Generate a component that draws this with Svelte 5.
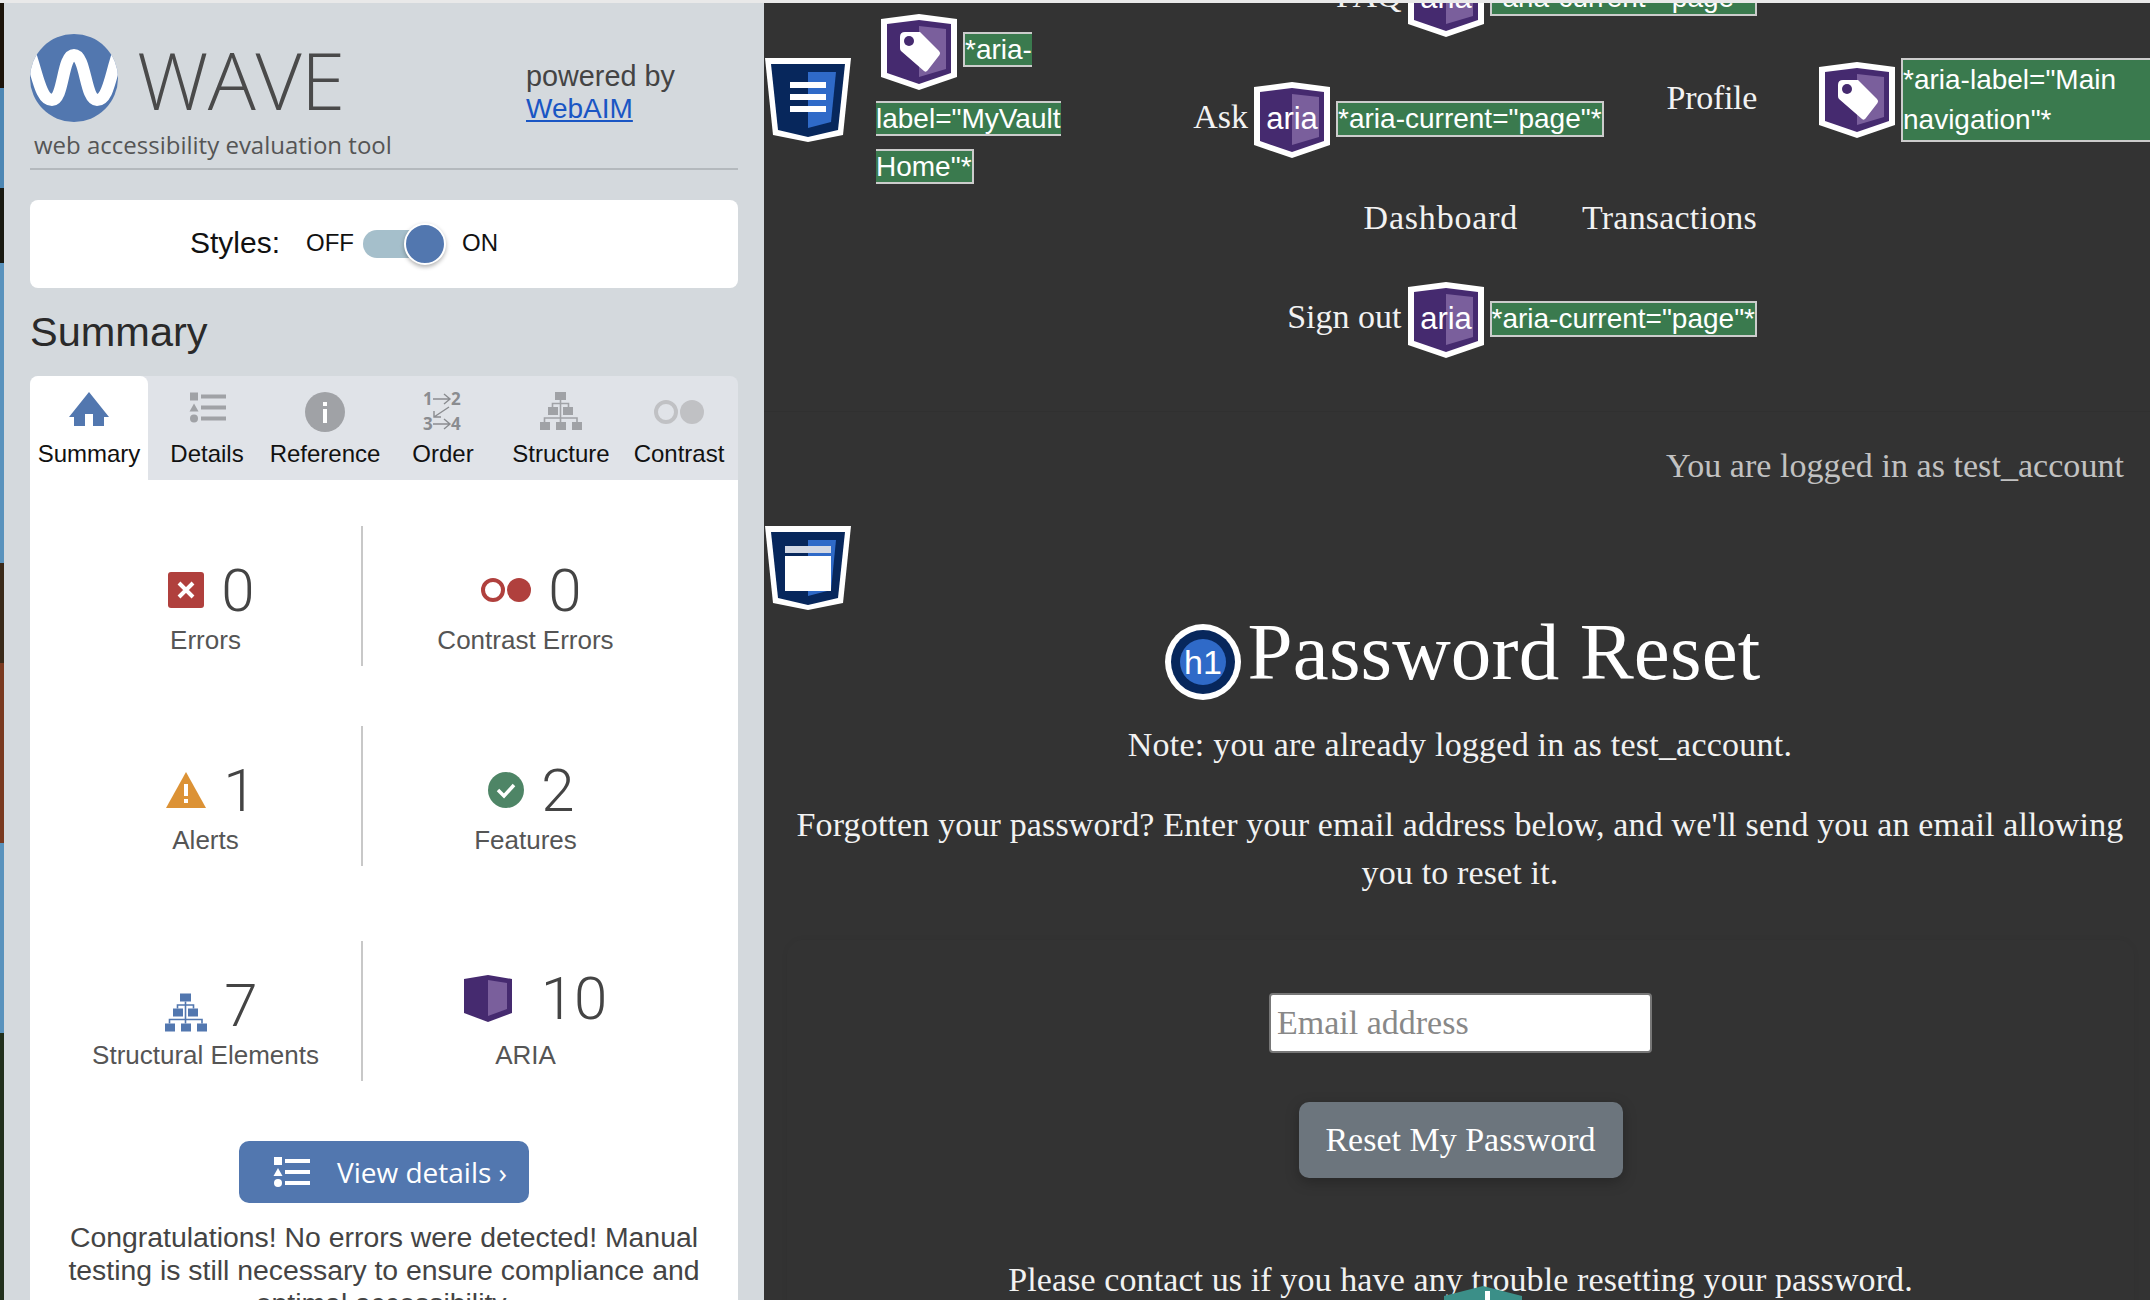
<script>
  const tabs = ['Summary', 'Details', 'Reference', 'Order', 'Structure', 'Contrast'];
</script>

{#snippet listIcon(w, h)}
  <svg width={w} height={h} viewBox="0 0 37 30" fill="currentColor" aria-hidden="true">
    <rect x="1" y="0" width="8" height="8" />
    <path d="M5 11 L9.5 19 H0.5 Z" />
    <circle cx="5" cy="26" r="4" />
    <rect x="12" y="2" width="25" height="4" />
    <rect x="12" y="13" width="25" height="4" />
    <rect x="12" y="24" width="25" height="4" />
  </svg>
{/snippet}

{#snippet org(w, h)}
  <svg width={w} height={h} viewBox="0 0 42 38" fill="currentColor" aria-hidden="true">
    <rect x="15" y="0" width="11" height="8" />
    <rect x="8" y="15" width="10" height="8" />
    <rect x="23" y="15" width="10" height="8" />
    <rect x="0" y="30" width="10" height="8" />
    <rect x="16" y="30" width="10" height="8" />
    <rect x="32" y="30" width="10" height="8" />
    <path d="M20.5 8 V30 M12.5 15 V11.5 H28.5 V15 M4.5 30 V26 H37 V30" fill="none" stroke="currentColor" stroke-width="1.6" />
  </svg>
{/snippet}

{#snippet shield(label)}
  <svg class="badge" width="76" height="76" viewBox="0 0 76 76" aria-hidden="true">
    <path d="M0 5 L38 0 L76 5 V63 L38 76 L0 63 Z" fill="#fff" />
    <path d="M6 10 L38 6 L70 10 V59 L38 70 L6 59 Z" fill="#452a6f" />
    <path d="M38 12 L65 15 V55 L38 63 Z" fill="#7a5f9c" />
    {#if label}
      <text x="38" y="47" text-anchor="middle" class="badge-text">aria</text>
    {:else}
      <path d="M24 18 H39 L58 37 Q60 39 58.500 41 L46.500 56.500 Q45 58.500 43 57 L20 37 Q19 36 19 34 V23 Q19 18 24 18 Z" fill="#fff" />
      <circle cx="28" cy="27" r="5" fill="#452a6f" />
    {/if}
  </svg>
{/snippet}

{#snippet html5(kind)}
  <svg class="h5" width="86" height="84" viewBox="0 0 86 84" aria-hidden="true">
    <path d="M0 0 H86 L78 77 L43 84 L8 77 Z" fill="#fff" />
    <path d="M6 6 H80 L73 72 L43 79 L13 72 Z" fill="#07275c" />
    <path d="M43 14 H71 L66 64 L43 70 Z" fill="#2f6ac8" />
    {#if kind === 'nav'}
      <rect x="25" y="24" width="36" height="6" fill="#fff" />
      <rect x="25" y="36" width="36" height="6" fill="#fff" />
      <rect x="25" y="48" width="36" height="6" fill="#fff" />
    {:else}
      <rect x="20" y="20" width="46" height="7" fill="#d3d8e4" />
      <rect x="20" y="30" width="46" height="35" fill="#fff" />
    {/if}
  </svg>
{/snippet}

<div class="strip-top"></div>
<div class="app">
  <div class="wall"></div>
  <aside class="side">
    <header class="head">
      <div class="brand-row">
        <svg class="logo" width="88" height="88" viewBox="0 0 88 88" aria-hidden="true">
          <defs><clipPath id="cc"><circle cx="44" cy="44" r="44" /></clipPath></defs>
          <circle cx="44" cy="44" r="44" fill="#5277af" />
          <path clip-path="url(#cc)" d="M-2 14 C8 40 10 66 22 66 C34 66 32 21 44 21 C56 21 55 66 67 66 C79 66 80 40 90 14" fill="none" stroke="#fff" stroke-width="12" />
        </svg>
        <div class="wave">WAVE</div>
        <div class="powered">powered by<br /><a href="#top">WebAIM</a></div>
      </div>
      <div class="tagline">web accessibility evaluation tool</div>
    </header>

    <div class="styles">
      <span class="st-label">Styles:</span>
      <span class="st-off">OFF</span>
      <span class="toggle"><span class="knob"></span></span>
      <span class="st-on">ON</span>
    </div>

    <h2 class="sum">Summary</h2>

    <div class="tabs">
      {#each tabs as t, i}
        <div class="tab" class:active={i === 0}>
          <div class="tab-ic">
            {#if i === 0}
              <svg width="40" height="34" viewBox="0 0 40 34" fill="#5277af" aria-hidden="true"><path d="M20 0 L40 25 H35 V34 H24 V22 H16 V34 H5 V25 H0 Z" /></svg>
            {:else if i === 1}
              <span class="grey">{@render listIcon(37, 31)}</span>
            {:else if i === 2}
              <svg width="40" height="40" viewBox="0 0 40 40" aria-hidden="true"><circle cx="20" cy="20" r="20" fill="#a0a2a6" /><rect x="18" y="10" width="4" height="4" fill="#fff" /><rect x="18" y="17" width="4" height="14" fill="#fff" /></svg>
            {:else if i === 3}
              <svg class="order-ic" width="46" height="56" viewBox="-3 -8 46 56" aria-hidden="true">
                <text x="0" y="13" class="ord">1</text><text x="28" y="13" class="ord">2</text>
                <text x="0" y="38" class="ord">3</text><text x="28" y="38" class="ord">4</text>
                <path d="M10 7 H26 M21 2 L27 7 L21 12 M10 32 H26 M21 27 L27 32 L21 37 M26 15 L11 25 M11 19 V25 H18" fill="none" stroke="#8a8c90" stroke-width="1.4" />
              </svg>
            {:else if i === 4}
              <span class="grey">{@render org(42, 38)}</span>
            {:else}
              <svg width="50" height="24" viewBox="0 0 50 24" aria-hidden="true"><circle cx="12" cy="12" r="10" fill="none" stroke="#c0c1c4" stroke-width="4" /><circle cx="38" cy="12" r="12" fill="#c0c1c4" /></svg>
            {/if}
          </div>
          <div class="tab-t">{t}</div>
        </div>
      {/each}
    </div>

    <div class="panel">
      <div class="grid">
        <div class="cell">
          <div class="num-row">
            <svg width="36" height="36" viewBox="0 0 36 36" aria-hidden="true"><rect width="36" height="36" rx="3" fill="#b0403d" /><path d="M11 11 L25 25 M25 11 L11 25" stroke="#fff" stroke-width="4" /></svg>
            <span class="num">0</span>
          </div>
          <div class="lab">Errors</div>
        </div>
        <div class="cell">
          <div class="num-row">
            <svg width="50" height="24" viewBox="0 0 50 24" aria-hidden="true"><circle cx="12" cy="12" r="10" fill="none" stroke="#b0403d" stroke-width="4" /><circle cx="38" cy="12" r="12" fill="#b0403d" /></svg>
            <span class="num">0</span>
          </div>
          <div class="lab">Contrast Errors</div>
        </div>
      </div>
      <div class="grid r2">
        <div class="cell">
          <div class="num-row">
            <svg width="40" height="36" viewBox="0 0 40 36" aria-hidden="true"><path d="M20 0 L40 36 H0 Z" fill="#dc9235" /><rect x="18" y="12" width="4" height="12" fill="#fff" /><rect x="18" y="27" width="4" height="4" fill="#fff" /></svg>
            <span class="num">1</span>
          </div>
          <div class="lab">Alerts</div>
        </div>
        <div class="cell">
          <div class="num-row">
            <svg width="36" height="36" viewBox="0 0 36 36" aria-hidden="true"><circle cx="18" cy="18" r="18" fill="#4e8566" /><path d="M10 18 L16 24 L26 13" fill="none" stroke="#fff" stroke-width="3.5" /></svg>
            <span class="num">2</span>
          </div>
          <div class="lab">Features</div>
        </div>
      </div>
      <div class="grid r3">
        <div class="cell">
          <div class="num-row">
            <span class="blue">{@render org(42, 39)}</span>
            <span class="num">7</span>
          </div>
          <div class="lab">Structural Elements</div>
        </div>
        <div class="cell">
          <div class="num-row lift">
            <svg class="aria-big" width="48" height="47" viewBox="0 0 48 47" aria-hidden="true"><path d="M0 4 L24 0 L48 4 V38 L24 47 L0 38 Z" fill="#452a6f" /><path d="M24 5 L43 8 V34 L24 41 Z" fill="#7a5f9c" /></svg>
            <span class="num">10</span>
          </div>
          <div class="lab">ARIA</div>
        </div>
      </div>

      <button class="view">
        <span class="view-ic">{@render listIcon(37, 30)}</span>
        <span>View details ›</span>
      </button>

      <p class="congrats">Congratulations! No errors were detected! Manual testing is still necessary to ensure compliance and optimal accessibility.</p>
    </div>
  </aside>

  <div class="page">
    <nav class="nav">
      <div class="nav-ic">{@render html5('nav')}</div>
      <div class="home">
        {@render shield(false)}<span class="tag">*aria-label="MyVault Home"*</span>
      </div>
      <div class="links">
        <div class="row">
          <span class="link">FAQ</span>{@render shield(true)}<span class="tag cur">*aria-current="page"*</span>
        </div>
        <div class="row row-b">
          <div class="item ask">
            <span class="link">Ask</span>{@render shield(true)}<span class="tag cur">*aria-current="page"*</span>
          </div>
          <span class="link profile">Profile</span>
        </div>
        <div class="row row-c">
          <span class="link dash">Dashboard</span>
          <span class="link">Transactions</span>
        </div>
        <div class="row row-d">
          <span class="link">Sign out</span>{@render shield(true)}<span class="tag cur">*aria-current="page"*</span>
        </div>
      </div>
      <div class="main-nav">
        {@render shield(false)}
        <div class="tag-block">*aria-label="Main navigation"*</div>
      </div>
    </nav>

    <main class="main">
      <div class="logged">You are logged in as test_account</div>
      <div class="main-ic">{@render html5('main')}</div>
      <div class="center">
        <div class="h1-row">
          <svg class="h1-ic" width="76" height="76" viewBox="0 0 76 76" aria-hidden="true">
            <circle cx="38" cy="38" r="38" fill="#fff" />
            <circle cx="38" cy="38" r="32" fill="#07275c" />
            <circle cx="38" cy="38" r="23" fill="#2f6ac8" />
            <text x="38" y="50" text-anchor="middle" class="h1-t">h1</text>
          </svg>
          <h1>Password Reset</h1>
        </div>
        <p class="note">Note: you are already logged in as test_account.</p>
        <p class="forgot">Forgotten your password? Enter your email address below, and we'll send you an email allowing you to reset it.</p>
        <div class="card">
          <input class="email" placeholder="Email address" />
          <button class="reset">Reset My Password</button>
          <p class="contact">Please contact us if you have any trouble resetting your password.</p>
          <svg class="teal" width="78" height="30" viewBox="0 0 78 30" aria-hidden="true">
            <path d="M0 10 L39 0 L78 10 V30 H0 Z" fill="#3b8f88" />
            <path d="M41 5 L46 5 L46 14 L41 14 Z" fill="#fff" />
          </svg>
        </div>
      </div>
    </main>
  </div>
</div>

<style>
  :global(body) { margin: 0; background: #333; }
  .strip-top { height: 3px; background: #e9e9e9; }
  .app { display: flex; height: 1297px; overflow: hidden; font-family: "Liberation Sans", Arial, sans-serif; }
  .wall {
    width: 4px; flex: none;
    background: linear-gradient(180deg, #1c140a 0 85px, #4d87b4 85px 185px, #1a1a12 185px 260px, #5a93bd 260px 560px, #3a2a1a 560px 660px, #7a3a20 660px 840px, #5a93bd 840px 1030px, #22301c 1030px 1300px);
  }
  .side { width: 760px; flex: none; background: #d4d9dd; padding: 0 26px; box-sizing: border-box; display: flex; flex-direction: column; }
  .side > * { flex-shrink: 0; }
  .head { border-bottom: 2px solid #b4b9bd; height: 167px; box-sizing: border-box; }
  .brand-row { display: flex; align-items: flex-start; padding-top: 31px; }
  .logo { flex: none; }
  .wave { font-family: "Open Sans", sans-serif; font-weight: 300; font-size: 80px; line-height: 88px; color: #4a4a4a; margin-left: 19px; margin-top: 1px; width: 390px; letter-spacing: -0.5px; }
  .powered { font-size: 28.800px; line-height: 32px; color: #444; margin-top: 26px; margin-left: -1px; white-space: nowrap; }
  .powered a { color: #1a56c4; font-size: 28px; }
  .tagline { font-family: "Open Sans", sans-serif; font-size: 24px; line-height: 32px; color: #555; margin: 4px 0 0 4px; }
  .styles { margin-top: 30px; height: 88px; border-radius: 8px; background: #fff; display: flex; align-items: center; padding-left: 160px; color: #111; }
  .st-label { font-size: 30px; margin: 0 26px 2px 0; }
  .st-off, .st-on { font-size: 24px; margin-bottom: 2px; }
  .toggle { width: 60px; height: 28px; border-radius: 14px; background: #a5bfcb; margin: 0 -2px 0 9px; position: relative; }
  .knob { position: absolute; right: -23px; top: -7px; width: 38px; height: 38px; background: #5277af; border: 2px solid #fff; border-radius: 50%; box-shadow: 0 2px 4px rgba(0,0,0,.3); }
  .st-on { margin-left: 41px; }
  .sum { font-weight: 400; font-size: 41.500px; line-height: 50px; color: #2a2a2a; margin: 19px 0 19px; }
  .tabs { display: flex; background: #e0e3e8; border-radius: 8px 8px 0 0; height: 104px; }
  .tab { width: 118px; text-align: center; flex: none; }
  .tab.active { background: #fff; border-radius: 8px 8px 0 0; }
  .tab-ic { height: 40px; margin-top: 16px; display: flex; align-items: flex-start; justify-content: center; }
  .tab-ic .order-ic { margin: -8px 0 -8px; }
  .tab:last-child .tab-ic { padding-top: 8px; height: 32px; }
  .tab-ic svg { display: block; }
  .grey { color: #a0a2a6; display: block; }
  .tab-t { font-size: 24px; line-height: 30px; color: #111; margin-top: 7px; white-space: nowrap; }
  .ord { font: bold 17px "Open Sans", sans-serif; fill: #8a8c90; }
  .panel { background: #fff; flex: 1 0 auto; padding-top: 46px; }
  .grid { display: grid; grid-template-columns: 313px 325px; margin-left: 20px; }
  .r2 { margin-top: 60px; }
  .r3 { margin-top: 75px; }
  .cell { height: 140px; padding-top: 29px; box-sizing: border-box; text-align: center; }
  .cell:first-child { border-right: 2px solid #c8c8c8; }
  .num-row { display: flex; justify-content: center; align-items: center; gap: 17px; height: 70px; padding-left: 12px; }
  .num-row.lift { margin-top: -7px; margin-bottom: 7px; padding-left: 20px; }
  .aria-big { margin-right: 12px; }
  .num { font-family: Roboto, sans-serif; font-weight: 300; font-size: 60px; line-height: 70px; color: #444; margin-top: 2px; }
  .lab { font-size: 26px; line-height: 30px; color: #555; }
  .blue { color: #5277af; display: block; line-height: 0; margin-top: 14px; }
  .view { display: flex; align-items: center; margin: 60px auto 0; width: 290px; height: 62px; border: 0; border-radius: 10px; background: #5277af; color: #fff; font: 28px "Open Sans", sans-serif; padding: 0 0 0 34px; }
  .view-ic { margin-right: 27px; display: block; line-height: 0; }
  .congrats { margin: 18px 30px 0; font-size: 28.400px; line-height: 33px; color: #444; text-align: center; }

  .page { flex: 1; min-width: 0; background: #333; overflow: hidden; font-family: "Liberation Serif", "Times New Roman", serif; color: #f2f2f2; letter-spacing: .15px; }
  .nav { height: 409px; display: flex; align-items: flex-start; box-sizing: border-box; border-bottom: 1px solid #303030; letter-spacing: normal; }
  .nav-ic { margin: 55px 0 0 1px; flex: none; }
  .h5 { display: block; }
  .home { margin: 8.500px 0 0 25px; width: 190px; flex: none; line-height: 48px; }
  .badge { vertical-align: middle; flex: none; margin-right: 6px; }
  .home .badge { margin: 2.500px 6px 8.500px 5px; }
  .badge-text { font: 31px "Liberation Sans", sans-serif; fill: #fff; }
  .tag { font: 28px "Liberation Sans", sans-serif; background: #3a7a4e; border: 2px solid #ccc; color: #fff; }
  .cur { white-space: nowrap; margin-bottom: 2px; }
  .links { width: 691px; flex: none; display: flex; flex-direction: column; align-items: flex-end; gap: 37px; margin-top: -42px; }
  .row { display: flex; align-items: center; height: 76px; }
  .link { font-size: 34px; line-height: 48px; white-space: nowrap; margin-right: 6px; }
  .row > .link, .ask > .link { margin-bottom: 6px; }
  .row-b { align-items: flex-start; height: 84px; gap: 63px; }
  .row-b > .link.profile { margin: 0; letter-spacing: -.3px; }
  .ask { display: flex; align-items: center; margin-top: 8px; }
  .row-c { height: 48px; gap: 64px; }
  .row-c .link { margin: 0 0 2px; letter-spacing: .2px; }
  .row-c .dash { letter-spacing: .8px; }
  .row-d { margin-top: 2px; }
  .main-nav { display: flex; align-items: center; margin: 55px 0 0 62px; flex: none; }
  .main-nav .badge { margin-top: 0; }
  .tag-block { font: 28px/40px "Liberation Sans", sans-serif; width: 290px; background: #3a7a4e; border: 2px solid #ccc; color: #fff; }

  .main { padding-top: 30px; }
  .logged { text-align: right; padding-right: 26px; font-size: 34px; line-height: 48px; color: #c2c2c2; letter-spacing: .05px; }
  .main-ic { margin: 36px 0 0 1px; }
  .center { margin-left: 6px; text-align: center; }
  .h1-row { display: flex; justify-content: center; gap: 7px; margin-top: -7px; padding-left: 5px; }
  .h1-ic { flex: none; margin-top: 21px; }
  .h1-t { font: 34px "Liberation Sans", sans-serif; fill: #fff; }
  h1 { font-weight: 400; font-size: 81px; line-height: 96px; margin: 1px 0 0; color: #fff; }
  .note { font-size: 34px; line-height: 48px; margin: 21px 0 0; letter-spacing: .23px; }
  .forgot { font-size: 34px; line-height: 48px; margin: 32px 20px 0; }
  .card { position: relative; margin: 43px 16px 0 17px; padding-top: 53px; height: 400px; box-sizing: border-box; border-radius: 16px; box-shadow: 0 0 6px rgba(0,0,0,.06); }
  .email { display: block; margin: 0 auto; width: 383px; height: 60px; box-sizing: border-box; border: 2px solid #777; border-radius: 4px; background: #fff; font: 34px "Liberation Serif", serif; padding: 0 6px; }
  .email::placeholder { color: #888; }
  .reset { display: block; margin: 49px auto 0; width: 324px; height: 76px; border: 0; border-radius: 10px; background: #6c757d; color: #fff; font: 34px "Liberation Serif", serif; box-shadow: 0 4px 14px rgba(0,0,0,.25); }
  .contact { font-size: 34px; line-height: 48px; margin: 78px 0 0; letter-spacing: .1px; }
  .teal { position: absolute; left: 657px; top: 346px; }
</style>
